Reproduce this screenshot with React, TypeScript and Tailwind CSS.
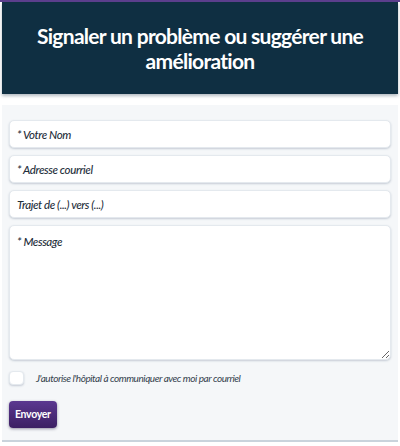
import React from "react";

const field =
  "w-full h-[28px] rounded-[5px] border border-[#e4e9ee] bg-white px-[7px] font-['Lato',sans-serif] text-[11.5px] italic font-medium tracking-[-0.4px] text-[#1f2f3c] shadow-[0_1px_2px_rgba(60,80,110,0.25)] outline-none placeholder:italic placeholder:text-[#1f2f3c]";

export default function App() {
  return (
    <div className="w-[400px] h-[446px] bg-white overflow-hidden font-['Lato',sans-serif]">
      {/* purple strip behind the header */}
      <div className="h-[2px] bg-[#5d3f8e]" />

      <header className="mx-[2px] h-[92px] bg-[#0f2f42] flex items-center justify-center shadow-[0_2px_3px_rgba(40,60,80,0.35)]">
        <h1 className="text-center text-white text-[21px] leading-[25px] font-bold tracking-[-0.7px] px-8">
          Signaler un problème ou suggérer une amélioration
        </h1>
      </header>

      <form className="mt-[11px] mx-[2px] bg-[#f5f7f9] border-b-2 border-[#c9d3dc] px-[7px] pt-[15px] pb-[12px] flex flex-col">
        <div className="flex flex-col gap-[7px]">
          <input className={field} placeholder="* Votre Nom" />
          <input className={field} placeholder="* Adresse courriel" />
          <input className={field} placeholder="Trajet de (...) vers (...)" />
          <textarea
            className={`${field} h-[135px] pt-[7px] resize-y`}
            placeholder="* Message"
          />
        </div>

        <label className="mt-[11px] h-[14px] flex items-center gap-[12px]">
          <span className="w-[15px] h-[14px] shrink-0 rounded-[4px] bg-white border border-[#e4e9ee] shadow-[0_1px_2px_rgba(60,80,110,0.25)]" />
          <span className="text-[10px] italic text-[#34414d] tracking-[-0.45px] whitespace-nowrap">
            J'autorise l'hôpital à communiquer avec moi par courriel
          </span>
        </label>

        <div className="mt-[16px] flex">
          <button
            type="button"
            className="h-[27px] px-[6px] rounded-[4px] bg-gradient-to-b from-[#5b3890] to-[#3c1f63] text-white text-[10.5px] font-bold tracking-[-0.3px] shadow-[0_1px_3px_rgba(30,20,60,0.45)]"
          >
            Envoyer
          </button>
        </div>
      </form>
    </div>
  );
}
